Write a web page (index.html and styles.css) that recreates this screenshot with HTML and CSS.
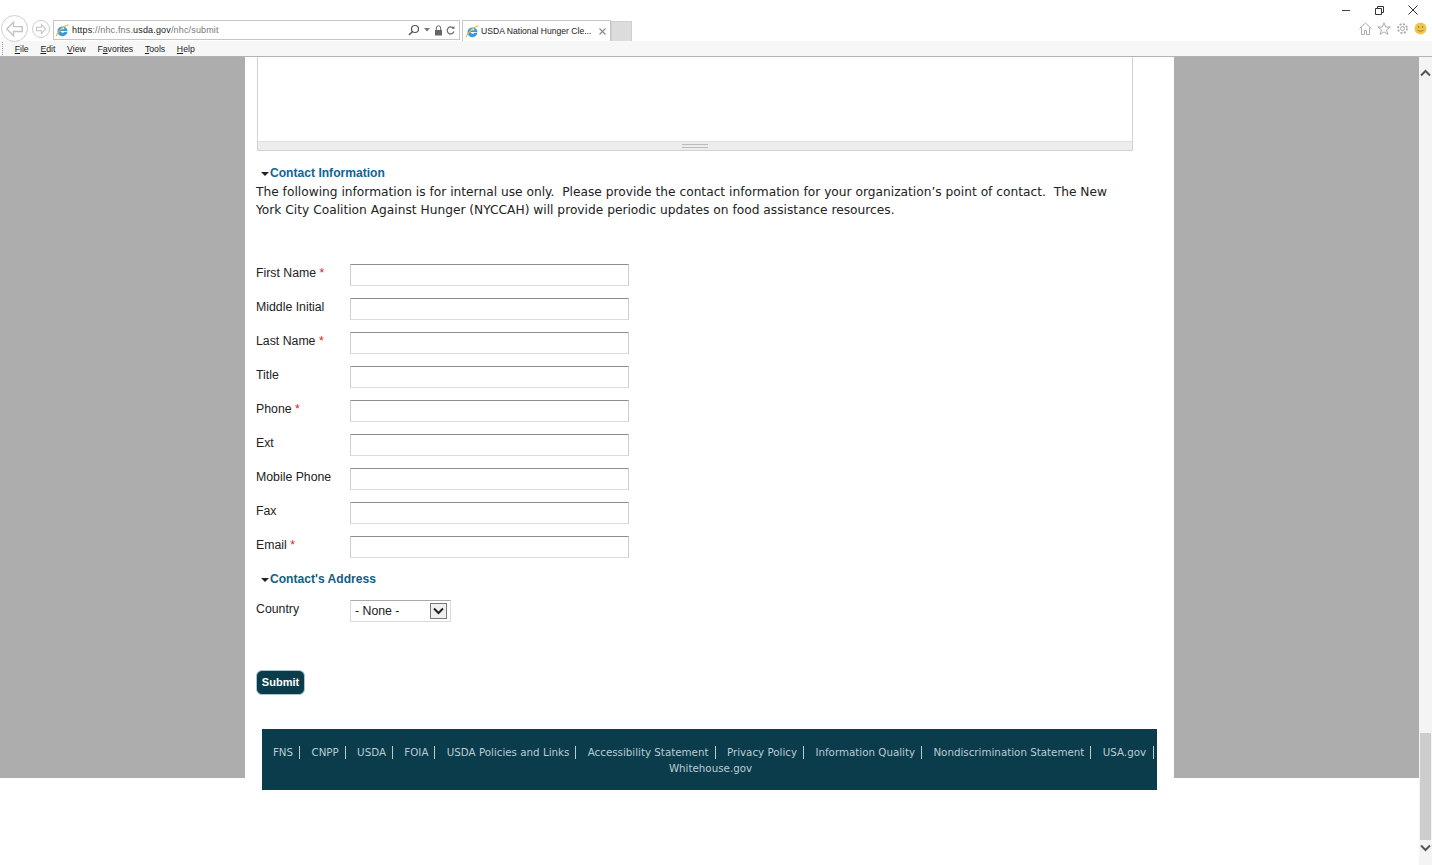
FILE: index.html
```html
<!DOCTYPE html>
<html lang="en">
<head>
<meta charset="utf-8">
<title>USDA National Hunger Clearinghouse</title>
<link rel="stylesheet" href="styles.css">
</head>
<body>
<div class="window">
  <header class="chrome">
    <div class="title-row">
      <div class="nav-circles">
        <span class="nav-btn back"><svg width="26" height="26" viewBox="0 0 26 26"><path d="M12 6 5 13l7 7v-4.500h9v-5h-9z" fill="none" stroke="#c4c4c4" stroke-width="1.500"/></svg></span>
        <span class="nav-btn fwd"><svg width="18" height="18" viewBox="0 0 18 18"><path d="M9.500 4 14.500 9l-5 5v-3H4V7h5.500z" fill="none" stroke="#c4c4c4" stroke-width="1.200"/></svg></span>
      </div>
      <div class="address">
        <svg class="ie" width="13" height="13" viewBox="0 0 13 13"><path d="M1.500 7a5 4.500 0 1 1 10 0H4.500a2.200 2 0 0 0 4 .8h3A5 4.800 0 0 1 1.500 7z" fill="#3a9ad9"/><path d="M4.500 5.300h4a2 1.800 0 0 0-4 0z" fill="#fff"/><path d="M0 12C2 8 7 2 12.500 .8" fill="none" stroke="#e8b83a" stroke-width="1.100"/></svg>
        <span class="url"><span class="dim-dark">https</span>://nhc.fns.<span class="dim-dark">usda.gov</span>/nhc/submit</span>
        <span class="addr-tools">
          <svg width="12" height="12" viewBox="0 0 12 12"><circle cx="7" cy="5" r="3.500" fill="none" stroke="#555" stroke-width="1.200"/><path d="M4.500 7.500 1 11" stroke="#555" stroke-width="1.500"/></svg>
          <svg width="6" height="4" viewBox="0 0 6 4"><path d="M0 0h6L3 3.500z" fill="#777"/></svg>
          <svg class="lock" width="9" height="11" viewBox="0 0 9 11"><path d="M2.300 5V3a2.200 2.200 0 0 1 4.400 0v2" fill="none" stroke="#666"/><rect x="1" y="5" width="7" height="5.500" fill="#666"/></svg>
          <svg width="9" height="11" viewBox="0 0 9 11"><path d="M7.500 3.300A3.500 3.500 0 1 0 8 6.500" fill="none" stroke="#666" stroke-width="1.100"/><path d="M5.500 3.800h3V1z" fill="#666"/></svg>
        </span>
      </div>
      <div class="tab">
        <svg class="ie" width="13" height="13" viewBox="0 0 13 13"><path d="M1.500 7a5 4.500 0 1 1 10 0H4.500a2.200 2 0 0 0 4 .8h3A5 4.800 0 0 1 1.500 7z" fill="#3a9ad9"/><path d="M4.500 5.300h4a2 1.800 0 0 0-4 0z" fill="#fff"/><path d="M0 12C2 8 7 2 12.500 .8" fill="none" stroke="#e8b83a" stroke-width="1.100"/></svg>
        <span class="tab-title">USDA National Hunger Cle...</span>
        <svg class="tab-x" width="7" height="7" viewBox="0 0 7 7"><path d="M.5.500l6 6M6.500.500l-6 6" stroke="#888" stroke-width="1.100"/></svg>
      </div>
      <div class="new-tab"></div>
      <div class="right-tools">
        <div class="win-btns">
          <svg width="9" height="9" viewBox="0 0 9 9"><path d="M0 4.500h8" stroke="#444"/></svg>
          <svg width="9" height="9" viewBox="0 0 9 9"><path d="M.5 2.500h6v6h-6zM2.500 2.500v-2h6v6h-2" fill="none" stroke="#333"/></svg>
          <svg width="10" height="10" viewBox="0 0 10 10"><path d="M.5.500l9 9M9.500.500l-9 9" stroke="#333"/></svg>
        </div>
        <div class="app-icons">
          <svg width="13" height="13" viewBox="0 0 13 13"><path d="M.5 6.500 6.500 1l6 5.500M2.500 5.500v7h3V8.500h2v4h3v-7" fill="none" stroke="#aaa"/></svg>
          <svg width="14" height="13" viewBox="0 0 14 13"><path d="M7 .8 8.700 5h4.600L9.600 7.800l1.300 4.600L7 9.800l-3.900 2.600 1.300-4.600L.7 5h4.600z" fill="none" stroke="#aaa"/></svg>
          <svg width="13" height="13" viewBox="0 0 13 13"><circle cx="6.500" cy="6.500" r="2" fill="none" stroke="#aaa"/><circle cx="6.500" cy="6.500" r="4.500" fill="none" stroke="#aaa" stroke-width="1.800" stroke-dasharray="2 1.530"/></svg>
          <svg width="13" height="13" viewBox="0 0 13 13"><circle cx="6.500" cy="6.500" r="6" fill="#eec64e"/><circle cx="4.500" cy="5" r=".8" fill="#8a7020"/><circle cx="8.500" cy="5" r=".8" fill="#8a7020"/><path d="M3.500 8.200q3 2.500 6 0" fill="none" stroke="#8a7020" stroke-width=".8"/></svg>
        </div>
      </div>
    </div>
    <nav class="menu-row">
      <span class="grip"></span>
      <span><u>F</u>ile</span><span><u>E</u>dit</span><span><u>V</u>iew</span><span>F<u>a</u>vorites</span><span><u>T</u>ools</span><span><u>H</u>elp</span>
    </nav>
  </header>
  <div class="viewport">
    <main class="page">
      <div class="backdrop">
        <div class="column">
          <div class="editor">
            <div class="editor-body"></div>
            <div class="editor-grip"><span></span></div>
          </div>
          <h2 class="section first"><span class="caret"></span>Contact Information</h2>
          <p class="intro">The following information is for internal use only.&nbsp; Please provide the contact information for your organization’s point of contact.&nbsp; The New York City Coalition Against Hunger (NYCCAH) will provide periodic updates on food assistance resources.</p>
          <form class="fields">
            <div class="field"><label>First Name <b>*</b></label><input type="text"></div>
            <div class="field"><label>Middle Initial</label><input type="text"></div>
            <div class="field"><label>Last Name <b>*</b></label><input type="text"></div>
            <div class="field"><label>Title</label><input type="text"></div>
            <div class="field"><label>Phone <b>*</b></label><input type="text"></div>
            <div class="field"><label>Ext</label><input type="text"></div>
            <div class="field"><label>Mobile Phone</label><input type="text"></div>
            <div class="field"><label>Fax</label><input type="text"></div>
            <div class="field"><label>Email <b>*</b></label><input type="text"></div>
            <h2 class="section"><span class="caret"></span>Contact's Address</h2>
            <div class="field country"><label>Country</label>
              <div class="select"><span>- None -</span><span class="select-btn"><svg width="11" height="8" viewBox="0 0 11 8"><path d="M1 1.500 5.500 6 10 1.500" fill="none" stroke="#222" stroke-width="2"/></svg></span></div>
            </div>
            <button class="submit" type="button">Submit</button>
          </form>
          <footer class="site-footer">
            <a>FNS</a><a>CNPP</a><a>USDA</a><a>FOIA</a><a>USDA Policies and Links</a><a>Accessibility Statement</a><a>Privacy Policy</a><a>Information Quality</a><a>Nondiscrimination Statement</a><a class="end">USA.gov</a><a class="last">Whitehouse.gov</a>
          </footer>
        </div>
      </div>
    </main>
    <aside class="scrollbar">
      <svg width="11" height="8" viewBox="0 0 11 8"><path d="M1 6.500 5.500 2 10 6.500" fill="none" stroke="#555" stroke-width="2"/></svg>
      <div class="track"><div class="thumb"></div></div>
      <svg width="11" height="8" viewBox="0 0 11 8"><path d="M1 1.500 5.500 6 10 1.500" fill="none" stroke="#555" stroke-width="2"/></svg>
    </aside>
  </div>
</div>
</body>
</html>
```
FILE: styles.css
```css
* { box-sizing: border-box; }
html, body { margin: 0; height: 100%; overflow: hidden; background: #fff; }
.window { width: 1432px; height: 865px; display: flex; flex-direction: column; font-family: "Liberation Sans", Arial, sans-serif; }

.chrome { height: 57px; flex: none; display: flex; flex-direction: column; border-bottom: 1px solid #b4b4b4; }
.title-row { height: 41px; flex: none; display: flex; align-items: flex-end; background: #fff; position: relative; }
.nav-circles { display: flex; align-items: center; padding-left: 1px; width: 53px; height: 27px; margin-bottom: -1px; }
.nav-btn { display: flex; align-items: center; justify-content: center; border: 1px solid #cfcfcf; border-radius: 50%; background: #fff; flex: none; }
.back { width: 27px; height: 27px; }
.fwd { width: 18px; height: 18px; margin-left: 4px; }
.address { width: 407px; height: 20px; margin-bottom: 1px; border: 1px solid #c6c6c6; display: flex; align-items: center; padding: 0 4px 0 2px; gap: 3px; font-size: 9px; color: #777; }
.ie { flex: none; }
.url { letter-spacing: .16px; }
.dim-dark { color: #222; }
.addr-tools { margin-left: auto; display: flex; align-items: center; gap: 4px; }
.lock { margin-right: -1px; }
.tab { width: 149px; height: 21px; margin-left: 2px; border: 1px solid #c6c6c6; border-bottom: 0; display: flex; align-items: center; padding: 0 4px 0 3px; gap: 2px; font-size: 8.600px; color: #222; background: #fff; }
.tab-title { flex: 1; white-space: nowrap; }
.tab-x { flex: none; }
.new-tab { width: 21px; height: 20px; background: #dcdcdc; border: 1px solid #cfcfcf; border-bottom: 0; }
.right-tools { margin-left: auto; width: 110px; align-self: stretch; display: flex; flex-direction: column; align-items: flex-end; }
.win-btns { display: flex; align-items: center; gap: 24px; height: 20px; padding-right: 14px; }
.app-icons { display: flex; align-items: center; gap: 5px; height: 17px; padding-right: 5px; }

.menu-row { flex: 1; display: flex; align-items: center; background: #f7f7f7; font-size: 8.700px; color: #222; gap: 11.700px; padding-left: 2px; }
.grip { width: 1px; height: 13px; border-left: 1px dotted #999; }

.viewport { flex: 1; display: flex; min-height: 0; }
.page { flex: 1; min-width: 0; background: #fff; }
.backdrop { height: 721px; background: #adadad; display: flex; justify-content: center; }
.column { width: 929px; height: 100%; background: #fff; padding: 0 11px; }

.editor { width: 876px; height: 94px; margin-left: 1px; border: 1px solid #d2d2d2; border-top: 0; display: flex; flex-direction: column; }
.editor-body { flex: 1; background: #fff; }
.editor-grip { height: 9px; background: #ededed; border-top: 1px solid #e0e0e0; display: flex; align-items: center; justify-content: center; }
.editor-grip span { width: 26px; height: 4px; border-top: 1px solid #bbb; border-bottom: 1px solid #bbb; }

.section { margin: 0; font-size: 12.100px; font-weight: 700; color: #0f6496; line-height: 14px; display: flex; align-items: center; }
.section.first { margin-top: 15px; }
.caret { width: 0; height: 0; border: 4px solid transparent; border-top-color: #222; border-bottom: 0; margin: 1px 1px 0 5px; }
.intro { margin: 3px 0 0; width: 860px; font: 12.220px/18px "DejaVu Sans", Verdana, sans-serif; color: #222; }

.fields { margin-top: 45px; display: flex; flex-direction: column; }
.field { display: flex; height: 34px; font-size: 12.300px; color: #222; }
.field label { width: 94px; flex: none; line-height: 16px; padding-top: 1px; }
.field b { font-weight: 400; color: #d22; }
.field input { width: 279px; height: 22px; margin: 0; padding: 0; background: #fff; border: 1px solid #cdcdcd; border-top-color: #8e8e8e; border-bottom-color: #dcdcdc; border-radius: 0; }
.fields .section { color: #11607f; margin-top: 2px; height: 14px; }
.country { margin-top: 14px; height: 22px; }
.select { width: 101px; height: 22px; border: 1px solid #dadada; border-top-color: #aaa; display: flex; align-items: center; justify-content: space-between; padding: 0 3px 0 4px; color: #222; }
.select-btn { width: 17px; height: 16px; background: #efefef; border: 1px solid #777; display: flex; align-items: center; justify-content: center; }
.submit { align-self: flex-start; margin: 48px 0 0; width: 49px; height: 25px; background: #0a3c4c; color: #fff; border: 1px solid #a9c4cc; border-radius: 6px; font: 700 11px "Liberation Sans", Arial, sans-serif; padding: 0 0 2px; }

.site-footer { width: 895px; height: 61px; margin: 34px 0 0 6px; background: #0a3c4c; text-align: center; padding: 15px 0 0 2px; font: 10.300px/16px "DejaVu Sans", Verdana, sans-serif; color: #bccbd2; }
.site-footer a { display: inline-block; padding: 0 6px; margin-right: 5.350px; border-right: 1px solid #bccbd2; line-height: 13px; }
.site-footer a.end { margin-right: 0; padding-right: 7px; }
.site-footer a.last { border-right: 0; display: block; line-height: 16px; padding: 0; margin: 0; }

.scrollbar { width: 13px; flex: none; background: #f4f4f4; display: flex; flex-direction: column; align-items: center; padding-top: 12px; }
.track { flex: 1; width: 11px; margin-top: 1px; display: flex; flex-direction: column; justify-content: flex-end; }
.thumb { height: 107px; background: #cdcdcd; }
.scrollbar svg:last-child { margin: 4px 0 13px; }
```
